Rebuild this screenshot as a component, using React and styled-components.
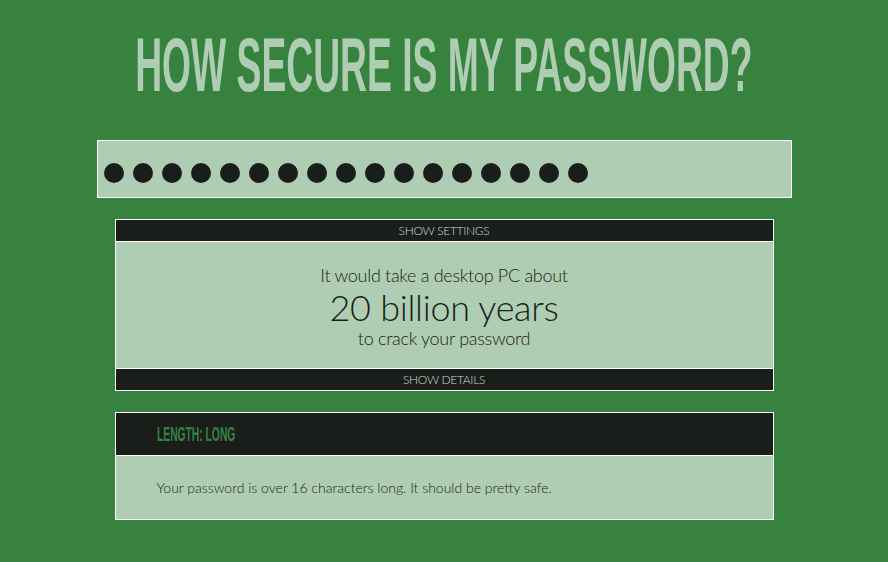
import styled, { createGlobalStyle } from 'styled-components'

const GlobalStyle = createGlobalStyle`
  html, body {
    margin: 0;
    padding: 0;
    background: #37823f;
  }
  body {
    font-family: Lato, "Open Sans", sans-serif;
  }
`

const Page = styled.div`
  width: 888px;
  height: 562px;
  background: #37823f;
  display: flex;
  flex-direction: column;
  align-items: center;
  overflow: hidden;
`

const Title = styled.h1`
  margin: 0;
  box-sizing: border-box;
  height: 140px;
  padding-bottom: 12px;
  display: flex;
  align-items: center;
  justify-content: center;
  color: #afcdb3;
  font-family: "Liberation Sans", Arial, sans-serif;
  font-weight: 700;
  font-size: 76px;
  white-space: nowrap;
`

const Squeeze = styled.span`
  display: inline-block;
  transform: scaleX(${(p) => p.$scale});
  transform-origin: ${(p) => p.$origin || 'center'};
`

const PasswordField = styled.div`
  box-sizing: border-box;
  width: 695px;
  height: 58px;
  border: 1px solid #ffffff;
  background: #afcdb3;
  display: flex;
  gap: 9px;
  padding: 22px 6px 0;
`

const Dot = styled.span`
  width: 20px;
  height: 20px;
  border-radius: 50%;
  background: #1a1e1b;
`

const Panel = styled.section`
  box-sizing: border-box;
  width: 659px;
  margin-top: 21px;
  border: 1px solid #ffffff;
  background: #afcdb3;
  display: flex;
  flex-direction: column;
`

const Toggle = styled.div`
  height: 21px;
  background: #1a1e1b;
  color: #d4d8d4;
  font-size: 12px;
  font-weight: 300;
  letter-spacing: -0.3px;
  display: flex;
  align-items: center;
  justify-content: center;
  ${(p) => (p.$top ? 'border-bottom: 1px solid #fff;' : 'border-top: 1px solid #fff;')}
`

const Estimate = styled.div`
  height: 126px;
  display: flex;
  flex-direction: column;
  align-items: center;
  justify-content: center;
  color: #1a1e1b;
  font-weight: 300;
  padding-top: 1px;
  box-sizing: border-box;
`

const Line = styled.div`
  font-size: ${(p) => p.$size}px;
  line-height: ${(p) => p.$lh}px;
  letter-spacing: -0.3px;
`

const CheckHeader = styled.div`
  height: 42px;
  background: #1a1e1b;
  border-bottom: 1px solid #fff;
  display: flex;
  align-items: center;
  padding-left: 41px;
  color: #37823f;
  font-family: "Liberation Sans", Arial, sans-serif;
  font-weight: 700;
  font-size: 21px;
  white-space: nowrap;
`

const CheckBody = styled.div`
  height: 63px;
  display: flex;
  align-items: center;
  padding-left: 41px;
  font-size: 14px;
  font-weight: 300;
  color: #1a1e1b;
`

export default function App() {
  return (
    <Page>
      <GlobalStyle />
      <Title>
        <Squeeze $scale={0.49}>HOW SECURE IS MY PASSWORD?</Squeeze>
      </Title>
      <PasswordField>
        {Array.from({ length: 17 }).map((_, i) => (
          <Dot key={i} />
        ))}
      </PasswordField>
      <Panel>
        <Toggle $top>SHOW SETTINGS</Toggle>
        <Estimate>
          <Line $size={18} $lh={24}>It would take a desktop PC about</Line>
          <Line $size={36} $lh={40}>20 billion years</Line>
          <Line $size={18} $lh={22}>to crack your password</Line>
        </Estimate>
        <Toggle>SHOW DETAILS</Toggle>
      </Panel>
      <Panel>
        <CheckHeader>
          <Squeeze $scale={0.49} $origin="left">LENGTH: LONG</Squeeze>
        </CheckHeader>
        <CheckBody>Your password is over 16 characters long. It should be pretty safe.</CheckBody>
      </Panel>
    </Page>
  )
}
